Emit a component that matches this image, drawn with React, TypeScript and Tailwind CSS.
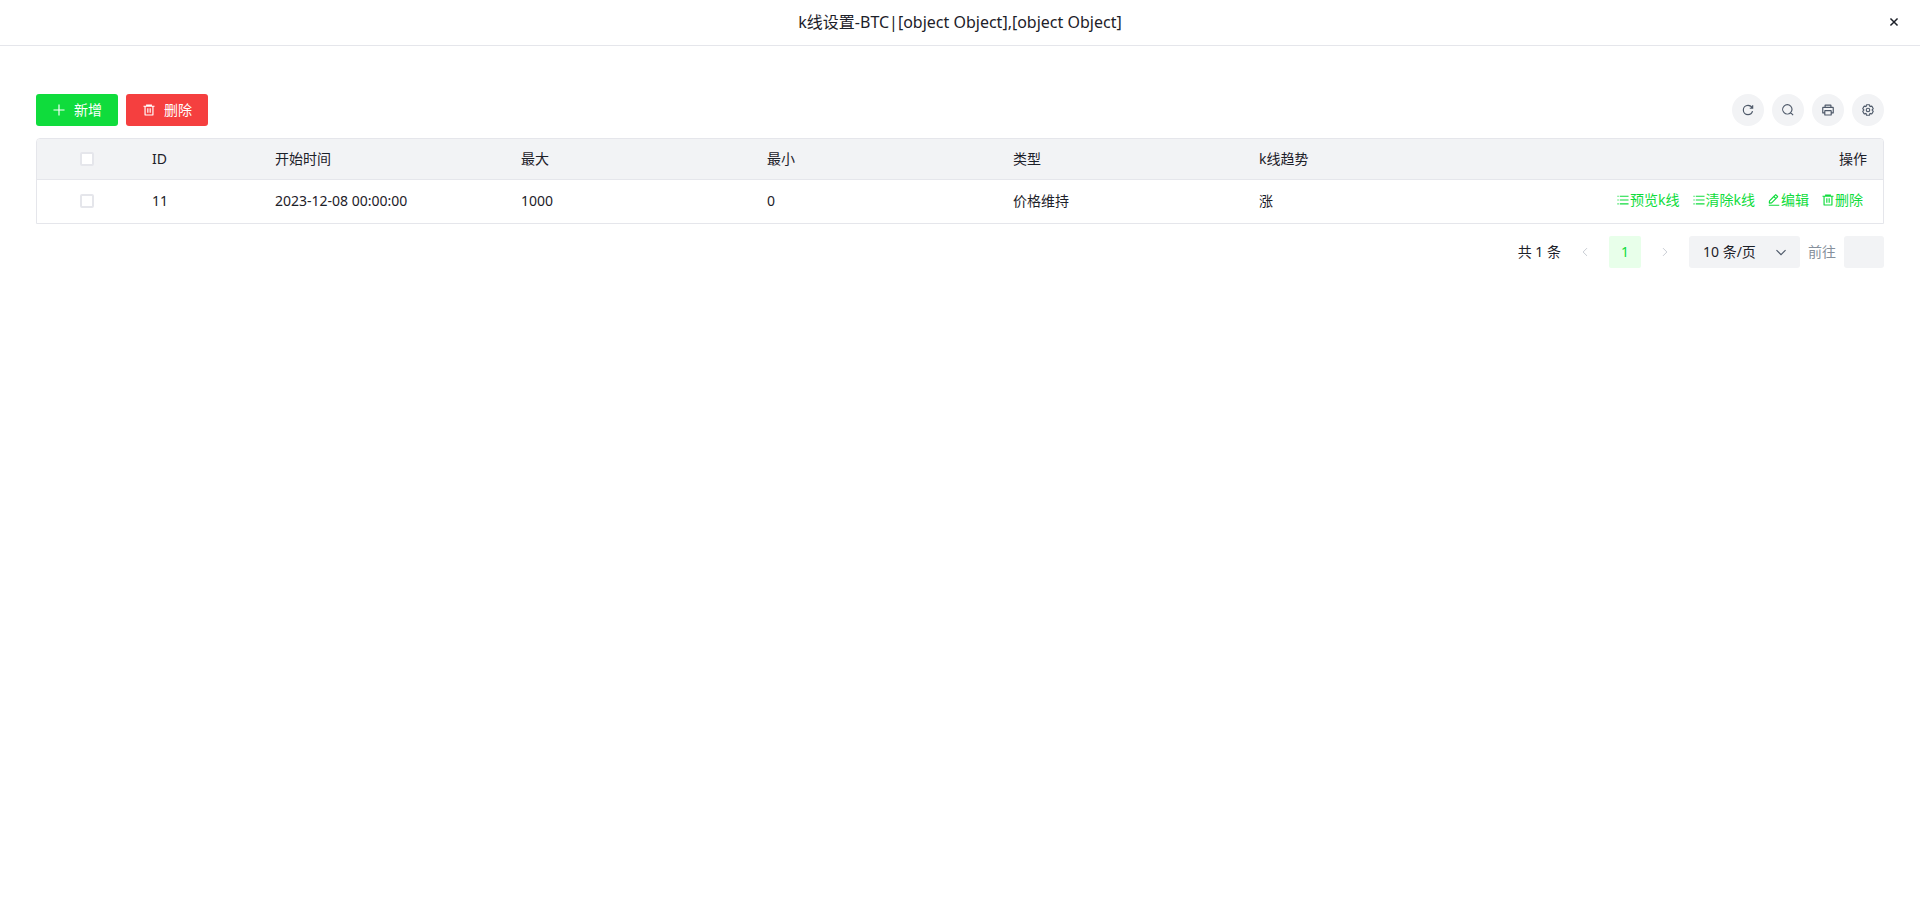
import type { ReactNode } from 'react';

const icons = {
  plus: 'M5 24h38M24 5v38',
  trash:
    'M5 11h5.5m0 0v29a1 1 0 0 0 1 1h25a1 1 0 0 0 1-1V11m-27 0H16m21.5 0H43m-5.5 0H32m-16 0V7h16v4m-16 0h16M20 18v15m8-15v15',
  refresh: 'M38.837 18C36.463 12.136 30.715 8 24 8 15.163 8 8 15.163 8 24s7.163 16 16 16c7.455 0 13.72-5.1 15.496-12M40 8v10H30',
  search:
    'M33.072 33.071c6.248-6.248 6.248-16.379 0-22.627-6.249-6.249-16.38-6.249-22.628 0-6.248 6.248-6.248 16.379 0 22.627 6.248 6.248 16.38 6.248 22.628 0Zm0 0 8.485 8.485',
  printer:
    'M14 15h20M14 15V8a1 1 0 0 1 1-1h18a1 1 0 0 1 1 1v7M14 15H7a1 1 0 0 0-1 1v17a1 1 0 0 0 1 1h6m21-19h7a1 1 0 0 1 1 1v17a1 1 0 0 1-1 1h-6M14 26h20a1 1 0 0 1 1 1v13a1 1 0 0 1-1 1H14a1 1 0 0 1-1-1V27a1 1 0 0 1 1-1Z',
  settings:
    'M18.797 6.732A1 1 0 0 1 19.76 6h8.48a1 1 0 0 1 .964.732l1.285 4.628a1 1 0 0 0 1.213.7l4.651-1.2a1 1 0 0 1 1.116.468l4.24 7.344a1 1 0 0 1-.153 1.2L38.193 23.3a1 1 0 0 0 0 1.402l3.364 3.427a1 1 0 0 1 .153 1.2l-4.24 7.344a1 1 0 0 1-1.116.468l-4.65-1.2a1 1 0 0 0-1.214.7l-1.285 4.628a1 1 0 0 1-.964.732h-8.48a1 1 0 0 1-.963-.732L17.51 36.64a1 1 0 0 0-1.213-.7l-4.65 1.2a1 1 0 0 1-1.116-.468l-4.24-7.344a1 1 0 0 1 .153-1.2L9.809 24.7a1 1 0 0 0 0-1.402l-3.364-3.427a1 1 0 0 1-.153-1.2l4.24-7.344a1 1 0 0 1 1.116-.468l4.65 1.2a1 1 0 0 0 1.213-.7l1.286-4.628ZM30 24a6 6 0 1 1-12 0 6 6 0 0 1 12 0Z',
  edit: 'm30.48 19.038 5.733-5.734a1 1 0 0 0 0-1.414l-5.586-5.586a1 1 0 0 0-1.414 0l-5.734 5.734m7 7L15.763 33.754a1 1 0 0 1-.59.286l-6.048.708a1 1 0 0 1-1.113-1.069l.477-6.31a1 1 0 0 1 .29-.631l14.7-14.7m7 7-7-7M6 42h36',
  list: 'M13 24h30M5 11h4m4 0h30M13 37h30M5 24h4M5 37h4',
  left: 'M32 8.4 16.444 23.956 32 39.513',
  right: 'm16 39.513 15.556-15.557L16 8.4',
  down: 'M39.6 17.443 24.043 33 8.487 17.443',
  close: 'M9.857 9.858 24 24m0 0 14.142 14.142M24 24 38.142 9.858M24 24 9.857 38.142',
};

type IconName = keyof typeof icons;

function Icon({ name, className = 'size-3.5' }: { name: IconName; className?: string }) {
  return (
    <svg viewBox="0 0 48 48" fill="none" stroke="currentColor" strokeWidth="4" className={`shrink-0 ${className}`} aria-hidden="true">
      <path d={icons[name]} />
    </svg>
  );
}

function Checkbox({ label }: { label: string }) {
  return (
    <input
      type="checkbox"
      aria-label={label}
      className="block mx-auto size-3.5 appearance-none rounded-xs border-2 border-[#e5e6eb] bg-white checked:bg-[#0fdc3c]"
    />
  );
}

function ToolButton({ icon, label }: { icon: IconName; label: string }) {
  return (
    <button aria-label={label} className="flex size-8 items-center justify-center rounded-full bg-[#f2f3f5] text-[#4e5969]">
      <Icon name={icon} />
    </button>
  );
}

function RowLink({ icon, children }: { icon: IconName; children: ReactNode }) {
  return (
    <a href="#" className="flex items-center text-[#0fdc3c]">
      <Icon name={icon} />
      {children}
    </a>
  );
}

const columns = ['ID', '开始时间', '最大', '最小', '类型', 'k线趋势'];

const rows = [['11', '2023-12-08 00:00:00', '1000', '0', '价格维持', '涨']];

export default function App() {
  return (
    <div className="min-h-screen bg-white font-['Noto_Sans','Noto_Sans_CJK_SC',sans-serif] text-sm leading-[22px] text-[#1d2129]">
      {/* Title bar */}
      <header className="flex h-[46px] items-center border-b border-[#e5e6eb] px-5 pb-0.5">
        <h1 className="flex-1 pl-3 text-center text-base">k线设置-BTC|[object Object],[object Object]</h1>
        <button aria-label="关闭" className="flex size-3 items-center justify-center">
          <Icon name="close" className="size-3 stroke-6" />
        </button>
      </header>

      <main className="px-9 pt-12">
        {/* Toolbar */}
        <div className="flex items-center justify-between">
          <div className="flex gap-2">
            <button className="flex h-8 items-center gap-2 rounded-[3px] bg-[#0fdc3c] px-4 text-white">
              <Icon name="plus" />
              新增
            </button>
            <button className="flex h-8 items-center gap-2 rounded-[3px] bg-[#f53f3f] px-4 text-white">
              <Icon name="trash" />
              删除
            </button>
          </div>
          <div className="flex gap-2">
            <ToolButton icon="refresh" label="刷新" />
            <ToolButton icon="search" label="搜索" />
            <ToolButton icon="printer" label="打印" />
            <ToolButton icon="settings" label="设置" />
          </div>
        </div>

        {/* Table */}
        <div className="mt-3 overflow-hidden rounded-t-sm border border-[#e5e6eb]">
          <table className="w-full table-fixed">
            <colgroup>
              <col className="w-[99px]" />
              <col className="w-[123px]" />
              <col className="w-[246px]" />
              <col className="w-[246px]" />
              <col className="w-[246px]" />
              <col className="w-[246px]" />
              <col className="w-[246px]" />
              <col />
            </colgroup>
            <thead className="bg-[#f2f3f5]">
              <tr className="h-10 border-b border-[#e5e6eb]">
                <th>
                  <Checkbox label="全选" />
                </th>
                {columns.map((name) => (
                  <th key={name} className="px-4 text-left font-normal">
                    {name}
                  </th>
                ))}
                <th className="px-4 text-right font-normal">操作</th>
              </tr>
            </thead>
            <tbody>
              {rows.map((row) => (
                <tr key={row[0]} className="h-11">
                  <td>
                    <Checkbox label={`选择 ${row[0]}`} />
                  </td>
                  {row.map((cell, i) => (
                    <td key={i} className="px-4">
                      {cell}
                    </td>
                  ))}
                  <td className="px-5 pb-0.5">
                    <div className="flex justify-end gap-3">
                      <RowLink icon="list">预览k线</RowLink>
                      <RowLink icon="list">清除k线</RowLink>
                      <RowLink icon="edit">编辑</RowLink>
                      <RowLink icon="trash">删除</RowLink>
                    </div>
                  </td>
                </tr>
              ))}
            </tbody>
          </table>
        </div>

        {/* Pagination */}
        <div className="mt-3 flex items-center justify-end gap-2">
          <span>共 1 条</span>
          <button disabled aria-label="上一页" className="flex size-8 items-center justify-center text-[#c9cdd4]">
            <Icon name="left" className="size-3" />
          </button>
          <button className="size-8 rounded-xs bg-[#e8ffea] text-[#0fdc3c]">1</button>
          <button disabled aria-label="下一页" className="flex size-8 items-center justify-center text-[#c9cdd4]">
            <Icon name="right" className="size-3" />
          </button>
          <div className="relative">
            <select aria-label="每页条数" className="h-8 w-[111px] appearance-none rounded-[3px] bg-[#f2f3f5] pl-3.5">
              <option>10 条/页</option>
              <option>20 条/页</option>
            </select>
            <span className="pointer-events-none absolute inset-y-0 right-3 flex items-center text-[#4e5969]">
              <Icon name="down" className="size-3.5" />
            </span>
          </div>
          <label htmlFor="jumper" className="text-[#86909c]">
            前往
          </label>
          <input id="jumper" className="h-8 w-10 rounded-[3px] bg-[#f2f3f5] px-2 text-center" />
        </div>
      </main>
    </div>
  );
}
